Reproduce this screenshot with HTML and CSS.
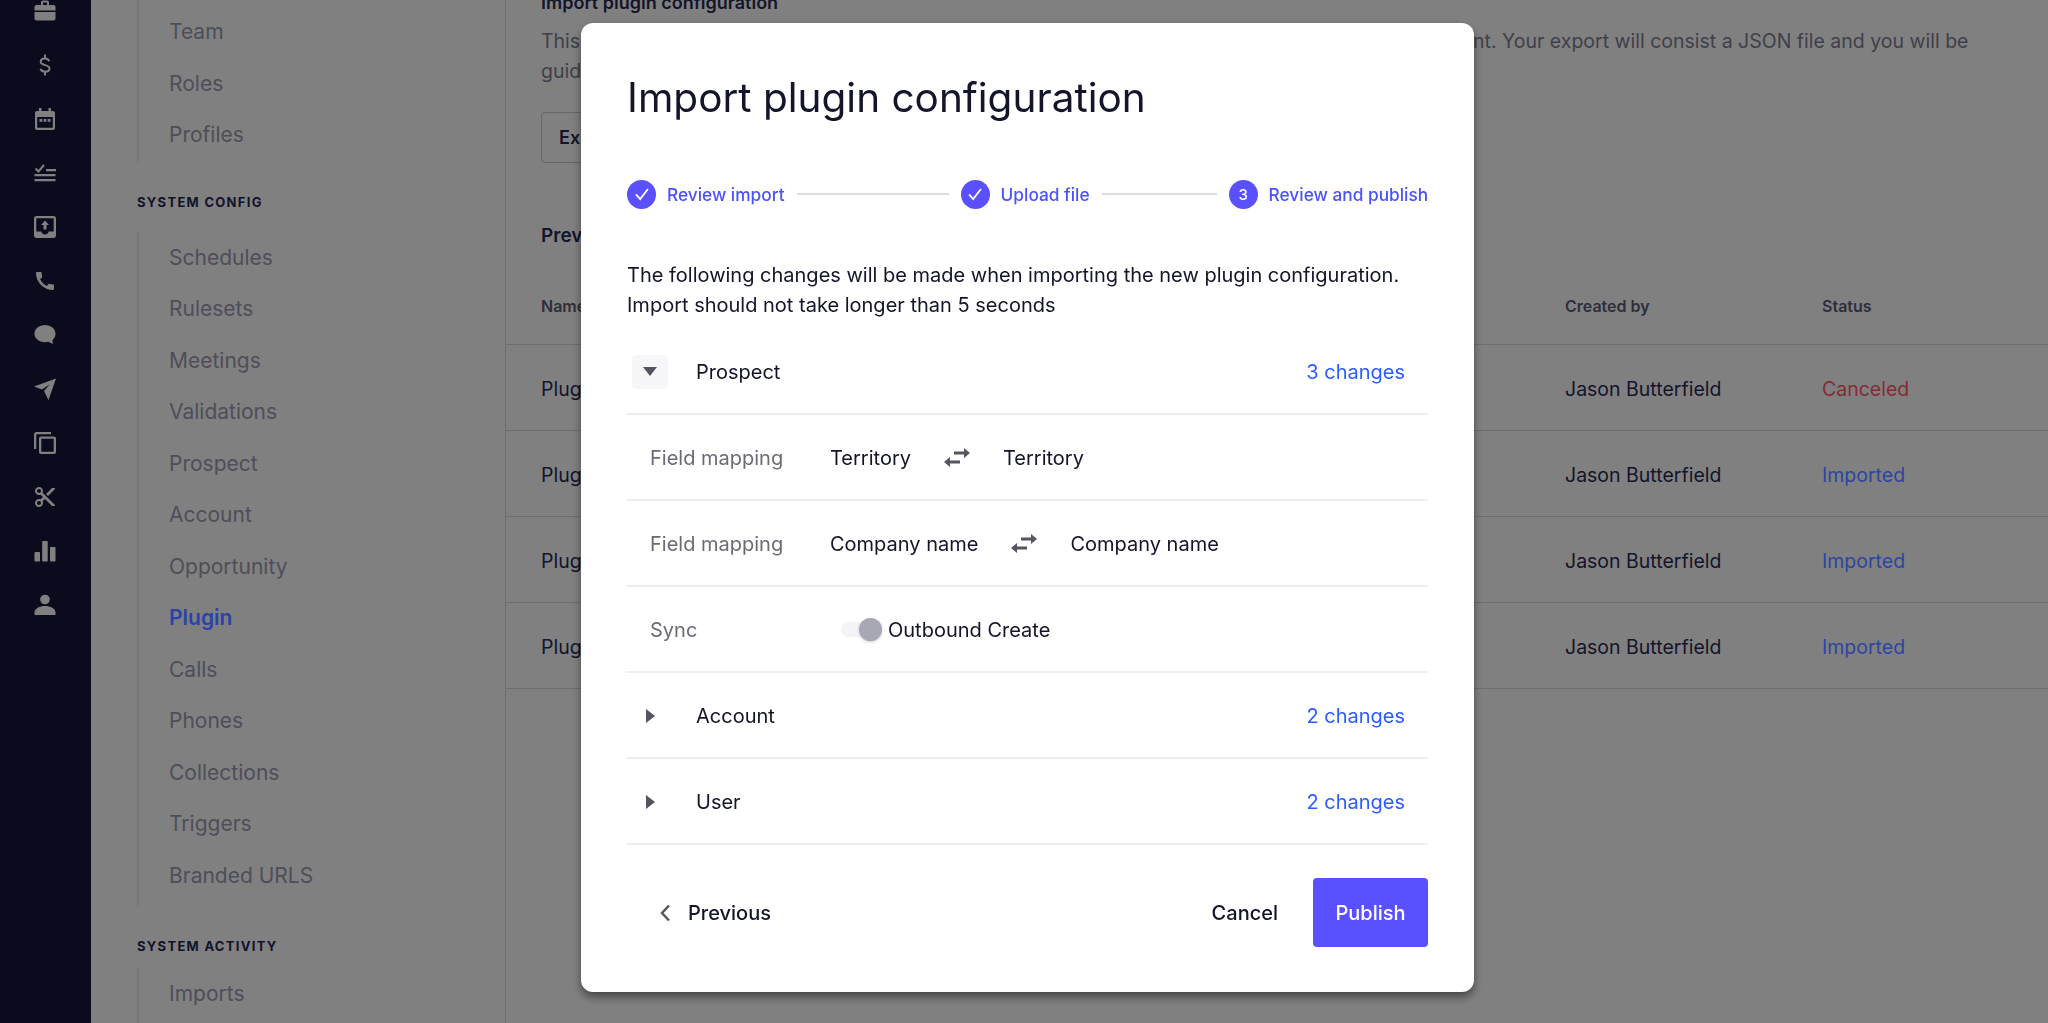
FILE: index.html
```html
<!DOCTYPE html>
<html lang="en">
<head>
    <meta charset="UTF-8">
    <title>Import plugin configuration</title>
    <link rel="stylesheet" href="styles.css">
</head>
<body>
    <div class="app">
        <aside class="sidebar">
            <svg class="side-icon side-icon-first" viewBox="0 0 24 24"><path d="M20.500 6H16V3.500C16 2.400 15.100 1.500 14 1.500h-4C8.900 1.500 8 2.400 8 3.500V6H3.500C2.400 6 1.500 6.900 1.500 8v3.500h21V8c0-1.100-.9-2-2-2zM14 6h-4V3.500h4V6zM1.500 13v6.500c0 1.100.9 2 2 2h17c1.100 0 2-.9 2-2V13h-21z"/></svg>
            <svg class="side-icon" viewBox="0 0 24 24"><path class="line" d="M16.200 8.300C15.700 6.500 14.100 5.500 12 5.500c-2.500 0-4.300 1.300-4.300 3.300 0 4.400 8.800 2.200 8.800 6.600 0 2-1.900 3.200-4.500 3.200-2.400 0-4-1-4.500-2.900M12 1.500v4M12 18.500v4"/></svg>
            <svg class="side-icon" viewBox="0 0 24 24"><path d="M6 1h2.500v3h7V1H18v3h2c1.100 0 2 .9 2 2v15c0 1.100-.9 2-2 2H4c-1.100 0-2-.9-2-2V6c0-1.100.9-2 2-2h2V1zM4.200 10v10.800h15.600V10H4.200z"/><rect x="6.500" y="12" width="2.800" height="2.800"/><rect x="10.600" y="12" width="2.800" height="2.800"/><rect x="14.700" y="12" width="2.800" height="2.800"/></svg>
            <svg class="side-icon" viewBox="0 0 24 24"><path class="line" d="M2.500 7.500l3 3 5.500-6.500"/><path d="M13 8h10v2.200H13zM1.500 13h21v2.200h-21zM1.500 18h21v2.200h-21z"/></svg>
            <svg class="side-icon" viewBox="0 0 24 24"><path d="M3.500 1h17C21.900 1 23 2.100 23 3.500v17c0 1.400-1.100 2.500-2.500 2.500h-17C2.100 23 1 21.900 1 20.500v-17C1 2.100 2.100 1 3.500 1zm-.2 2.300v13.200h5c.6 1.800 2 3 3.700 3s3.100-1.200 3.700-3h5V3.300H3.300z"/><path d="M12 5.500l4 4.500h-2.500v4.500h-3V10H8z"/></svg>
            <svg class="side-icon" viewBox="0 0 24 24"><path d="M20.010 15.380c-1.230 0-2.420-.2-3.530-.56-.35-.12-.74-.03-1.010.24l-1.570 1.970c-2.830-1.350-5.480-3.900-6.890-6.830l1.950-1.660c.27-.28.35-.67.24-1.020-.37-1.110-.56-2.300-.56-3.530 0-.54-.45-.99-.99-.99H4.190C3.650 3 3 3.240 3 3.990 3 13.280 10.730 21 20.010 21c.71 0 .99-.63.99-1.180v-3.450c0-.54-.45-.99-.99-.99z"/></svg>
            <svg class="side-icon" viewBox="0 0 24 24"><path d="M12 2c5.800 0 10.500 3.700 10.500 8.800 0 2.600-1.200 4.800-3.100 6.400l.6 3.800-4.500-2.300c-1.100.3-2.300.5-3.500.5-5.800 0-10.500-3.700-10.500-8.400C1.500 5.700 6.200 2 12 2z"/></svg>
            <svg class="side-icon" viewBox="0 0 24 24"><path d="M23 1.500L15.500 23l-4.500-9 5.500-6.500-7.500 5L1 9.500z"/></svg>
            <svg class="side-icon" viewBox="0 0 24 24"><path d="M3.300 1H18v2.300H3.300V18H1V3.300C1 2 2 1 3.300 1zM8 5.500h13c1.100 0 2 .9 2 2V21c0 1.100-.9 2-2 2H8c-1.100 0-2-.9-2-2V7.500c0-1.100.9-2 2-2zm.3 2.300v12.900h12.400V7.800H8.300z"/></svg>
            <svg class="side-icon" viewBox="0 0 24 24"><path d="M9.640 7.640c.23-.5.36-1.050.36-1.640 0-2.210-1.790-4-4-4S2 3.790 2 6s1.790 4 4 4c.59 0 1.140-.13 1.640-.36L10 12l-2.360 2.360C7.140 14.130 6.590 14 6 14c-2.210 0-4 1.790-4 4s1.790 4 4 4 4-1.790 4-4c0-.59-.13-1.140-.36-1.640L12 14l7 7h3v-1L9.640 7.640zM6 8c-1.100 0-2-.89-2-2s.9-2 2-2 2 .89 2 2-.9 2-2 2zm0 12c-1.100 0-2-.89-2-2s.9-2 2-2 2 .89 2 2-.9 2-2 2zM19 3l-6 6 2 2 7-7V3z"/></svg>
            <svg class="side-icon" viewBox="0 0 24 24"><rect x="1.500" y="13" width="5.500" height="9.500" rx=".8"/><rect x="9.200" y="2" width="5.500" height="20.500" rx=".8"/><rect x="17" y="8" width="5.500" height="14.500" rx=".8"/></svg>
            <svg class="side-icon" viewBox="0 0 24 24"><circle cx="12" cy="6.500" r="4.800"/><path d="M1.500 22v-2.500c0-4 5-6.500 10.500-6.500s10.500 2.500 10.500 6.500V22z"/></svg>
        </aside>

        <nav class="nav">
            <ul class="nav-group nav-group-top">
                <li>Team</li>
                <li>Roles</li>
                <li>Profiles</li>
            </ul>
            <div class="nav-title">SYSTEM CONFIG</div>
            <ul class="nav-group nav-group-config">
                <li>Schedules</li>
                <li>Rulesets</li>
                <li>Meetings</li>
                <li>Validations</li>
                <li>Prospect</li>
                <li>Account</li>
                <li>Opportunity</li>
                <li class="active">Plugin</li>
                <li>Calls</li>
                <li>Phones</li>
                <li>Collections</li>
                <li>Triggers</li>
                <li>Branded URLS</li>
            </ul>
            <div class="nav-title nav-title-activity">SYSTEM ACTIVITY</div>
            <ul class="nav-group">
                <li>Imports</li>
            </ul>
        </nav>

        <main class="main">
            <div class="intro">
                <h2>Import plugin configuration</h2>
                <p>This will export your current plugin configuration so it can be used in another live sandbox environment. Your export will consist a JSON file and you will be guided through the import.</p>
                <button class="export-btn">Export</button>
            </div>
            <h3 class="table-title">Previous imports</h3>
            <div class="table">
                <div class="table-row table-head">
                    <span class="col-name">Name</span>
                    <span class="col-by">Created by</span>
                    <span>Status</span>
                </div>
                <div class="table-row">
                    <span class="col-name">Plugin configuration</span>
                    <span class="col-by">Jason Butterfield</span>
                    <span class="canceled">Canceled</span>
                </div>
                <div class="table-row">
                    <span class="col-name">Plugin configuration</span>
                    <span class="col-by">Jason Butterfield</span>
                    <span class="imported">Imported</span>
                </div>
                <div class="table-row">
                    <span class="col-name">Plugin configuration</span>
                    <span class="col-by">Jason Butterfield</span>
                    <span class="imported">Imported</span>
                </div>
                <div class="table-row">
                    <span class="col-name">Plugin configuration</span>
                    <span class="col-by">Jason Butterfield</span>
                    <span class="imported">Imported</span>
                </div>
            </div>
        </main>
    </div>

    <div class="modal-layer">
        <div class="modal">
            <h1>Import plugin configuration</h1>

            <div class="stepper">
                <span class="step-dot"><svg viewBox="0 0 24 24"><path d="M5.500 12.500l4.500 5 8.500-11"/></svg></span>
                <span class="step-label">Review import</span>
                <span class="step-line step-line-1"></span>
                <span class="step-dot"><svg viewBox="0 0 24 24"><path d="M5.500 12.500l4.500 5 8.500-11"/></svg></span>
                <span class="step-label">Upload file</span>
                <span class="step-line step-line-2"></span>
                <span class="step-dot">3</span>
                <span class="step-label">Review and publish</span>
            </div>

            <p class="description">The following changes will be made when importing the new plugin configuration.<br>Import should not take longer than 5 seconds</p>

            <div class="changes">
                <div class="row">
                    <span class="caret caret-open"><svg width="14" height="9" viewBox="0 0 14 9"><path d="M0 0h14L7 9z"/></svg></span>
                    <span class="row-name">Prospect</span>
                    <span class="row-count">3 changes</span>
                </div>
                <div class="row">
                    <span class="row-label">Field mapping</span>
                    <div class="mapping">
                        <span>Territory</span>
                        <svg class="swap" viewBox="0 0 26 19"><path d="M10 3.500h10V0l6 5-6 5V6.500H10zM16 12.500H6V9l-6 5 6 5v-3.500h10z"/></svg>
                        <span>Territory</span>
                    </div>
                </div>
                <div class="row">
                    <span class="row-label">Field mapping</span>
                    <div class="mapping">
                        <span>Company name</span>
                        <svg class="swap" viewBox="0 0 26 19"><path d="M10 3.500h10V0l6 5-6 5V6.500H10zM16 12.500H6V9l-6 5 6 5v-3.500h10z"/></svg>
                        <span>Company name</span>
                    </div>
                </div>
                <div class="row">
                    <span class="row-label">Sync</span>
                    <span class="switch"><span class="switch-thumb"></span></span>
                    <span class="switch-text">Outbound Create</span>
                </div>
                <div class="row">
                    <span class="caret"><svg width="9" height="14" viewBox="0 0 9 14"><path d="M0 0l9 7-9 7z"/></svg></span>
                    <span class="row-name">Account</span>
                    <span class="row-count">2 changes</span>
                </div>
                <div class="row">
                    <span class="caret"><svg width="9" height="14" viewBox="0 0 9 14"><path d="M0 0l9 7-9 7z"/></svg></span>
                    <span class="row-name">User</span>
                    <span class="row-count">2 changes</span>
                </div>
            </div>

            <div class="modal-footer">
                <button class="previous-btn"><svg width="12" height="18" viewBox="0 0 12 18"><path d="M10 1.500L3 9l7 7.500"/></svg>Previous</button>
                <div class="footer-right">
                    <button class="cancel-btn">Cancel</button>
                    <button class="publish-btn">Publish</button>
                </div>
            </div>
        </div>
    </div>
</body>
</html>
```

FILE: styles.css
```css
* {
    box-sizing: border-box;
}

html, body {
    height: 100%;
}

body {
    margin: 0;
    overflow: hidden;
    background-color: #808080;
    font-family: Inter, "Noto Sans", sans-serif;
    color: #14142b;
}

button {
    font-family: inherit;
    border: none;
    background: none;
    cursor: pointer;
}

.app {
    display: flex;
    height: 100%;
}

/* Dark icon rail */
.sidebar {
    flex: 0 0 91px;
    padding-right: 2px;
    background-color: #0c0b1e;
    display: flex;
    flex-direction: column;
    align-items: center;
    gap: 30px;
}

.side-icon {
    flex: none;
    width: 24px;
    height: 24px;
    fill: #808080;
}

.side-icon-first {
    margin-top: -1px;
}

.side-icon .line {
    fill: none;
    stroke: #808080;
    stroke-width: 2;
}

/* Settings nav */
.nav {
    flex: 0 0 415px;
    padding-left: 46px;
    border-right: 1px solid #707070;
}

.nav-group {
    list-style: none;
    margin: 0;
    padding: 0 0 5px 30px;
    border-left: 2px solid #777777;
}

.nav-group-top {
    padding-top: 6px;
    padding-bottom: 1px;
}

.nav-group li {
    height: 51.500px;
    line-height: 51.500px;
    font-size: 21px;
    color: #4e4e58;
}

.nav-group .active {
    color: #2a42aa;
    font-weight: 600;
}

.nav-title {
    margin: 30px 0 20px;
    height: 20px;
    line-height: 20px;
    font-size: 13px;
    font-weight: 700;
    letter-spacing: 1.300px;
    color: #12122a;
}

.nav-title-activity {
    margin-bottom: 12px;
}

/* Page behind the dialog */
.main {
    flex: 1;
    min-width: 0;
    overflow: hidden;
}

.intro {
    margin-top: -10px;
    padding: 0 35px;
    height: 172px;
}

.intro h2 {
    margin: 0;
    height: 26px;
    line-height: 26px;
    font-size: 18px;
    font-weight: 600;
    color: #14142b;
}

.intro p {
    margin: 10px 0 0;
    width: 1440px;
    font-size: 19.500px;
    line-height: 30px;
    color: #3f3f4a;
}

.export-btn {
    margin-top: 26px;
    height: 51px;
    width: 220px;
    padding: 0 17px;
    text-align: left;
    border: 1px solid #666666;
    border-radius: 4px;
    font-size: 18px;
    font-weight: 600;
    color: #14142b;
}

.table-title {
    margin: 61px 0 0 35px;
    height: 26px;
    line-height: 26px;
    font-size: 19px;
    font-weight: 600;
    color: #14142b;
}

.table-row {
    display: flex;
    align-items: center;
    height: 86px;
    padding-left: 35px;
    padding-top: 2px;
    border-bottom: 1px solid #6e6e6e;
    font-size: 19.500px;
    color: #14142b;
}

.table-head {
    height: 96px;
    padding-top: 18px;
    font-size: 16px;
    font-weight: 600;
    color: #2e2e3c;
}

.col-name {
    width: 1024px;
    flex: none;
}

.col-by {
    width: 257px;
    flex: none;
}

.canceled {
    color: #842c36;
}

.imported {
    color: #2c46a0;
}

/* Dialog */
.modal-layer {
    position: fixed;
    inset: 0;
    display: flex;
    justify-content: center;
    padding: 23px 0 0 7px;
}

.modal {
    width: 893px;
    height: 969px;
    padding: 50px 46px 0;
    background-color: #ffffff;
    border-radius: 12px;
    box-shadow: 0 5px 8px rgba(0, 0, 0, 0.45);
}

.modal h1 {
    margin: 0;
    height: 50px;
    line-height: 50px;
    font-size: 40.500px;
    font-weight: 400;
    color: #14142b;
}

.stepper {
    display: flex;
    align-items: center;
    margin-top: 56px;
    height: 30px;
}

.step-dot {
    flex: none;
    width: 29px;
    height: 29px;
    border-radius: 50%;
    background-color: #5a50ff;
    color: #ffffff;
    font-size: 15px;
    font-weight: 500;
    display: flex;
    align-items: center;
    justify-content: center;
}

.step-dot svg {
    width: 22px;
    height: 22px;
    fill: none;
    stroke: #ffffff;
    stroke-width: 2;
}

.step-label {
    margin-left: 11px;
    font-size: 17.300px;
    font-weight: 500;
    color: #4a52ff;
    white-space: nowrap;
}

.step-line {
    height: 2px;
    margin: 0 12px 0 12px;
    background-color: #dcdce4;
}

.step-line-1 {
    flex: 0 0 152px;
}

.step-line-2 {
    flex: 0 0 115px;
}

.description {
    margin: 51px 0 0;
    font-size: 20px;
    line-height: 30px;
    color: #14142b;
}

.changes {
    margin-top: 9px;
}

.row {
    display: flex;
    align-items: center;
    height: 86px;
    padding-top: 1px;
    border-bottom: 2px solid #eeeef2;
    font-size: 20px;
}

.caret {
    flex: none;
    width: 36px;
    height: 34px;
    margin-left: 5px;
    border-radius: 4px;
    display: flex;
    align-items: center;
    justify-content: center;
}

.caret svg {
    fill: #55555f;
}

.caret-open {
    background-color: #f7f7f9;
}

.row-name {
    margin-left: 28px;
}

.row-count {
    margin-left: auto;
    margin-right: 23px;
    color: #2b5cff;
}

.row-label {
    flex: none;
    width: 203px;
    padding-left: 23px;
    color: #6b6b76;
}

.mapping {
    display: flex;
    align-items: center;
    gap: 33px;
}

.swap {
    width: 26px;
    height: 19px;
    fill: #55555f;
}

.switch {
    position: relative;
    flex: none;
    width: 29px;
    height: 15px;
    margin-left: 11px;
    border-radius: 8px;
    background-color: #f4f4f7;
}

.switch-thumb {
    position: absolute;
    top: -4px;
    left: 18px;
    width: 23px;
    height: 23px;
    border-radius: 50%;
    background-color: #a8a8b4;
    box-shadow: 0 1px 3px rgba(0, 0, 0, 0.2);
}

.switch-text {
    margin-left: 18px;
}

.modal-footer {
    display: flex;
    align-items: center;
    justify-content: space-between;
    margin-top: 33px;
}

.previous-btn {
    display: flex;
    align-items: center;
    gap: 17px;
    padding: 0 0 0 32px;
    font-size: 20px;
    font-weight: 500;
    color: #14142b;
}

.previous-btn svg {
    fill: none;
    stroke: #55555f;
    stroke-width: 2.500;
}

.footer-right {
    display: flex;
    align-items: center;
    gap: 35px;
}

.cancel-btn {
    padding: 0;
    font-size: 20px;
    font-weight: 500;
    color: #14142b;
}

.publish-btn {
    width: 115px;
    height: 69px;
    border-radius: 4px;
    background-color: #5a50ff;
    color: #ffffff;
    font-size: 20px;
    font-weight: 500;
}
```
